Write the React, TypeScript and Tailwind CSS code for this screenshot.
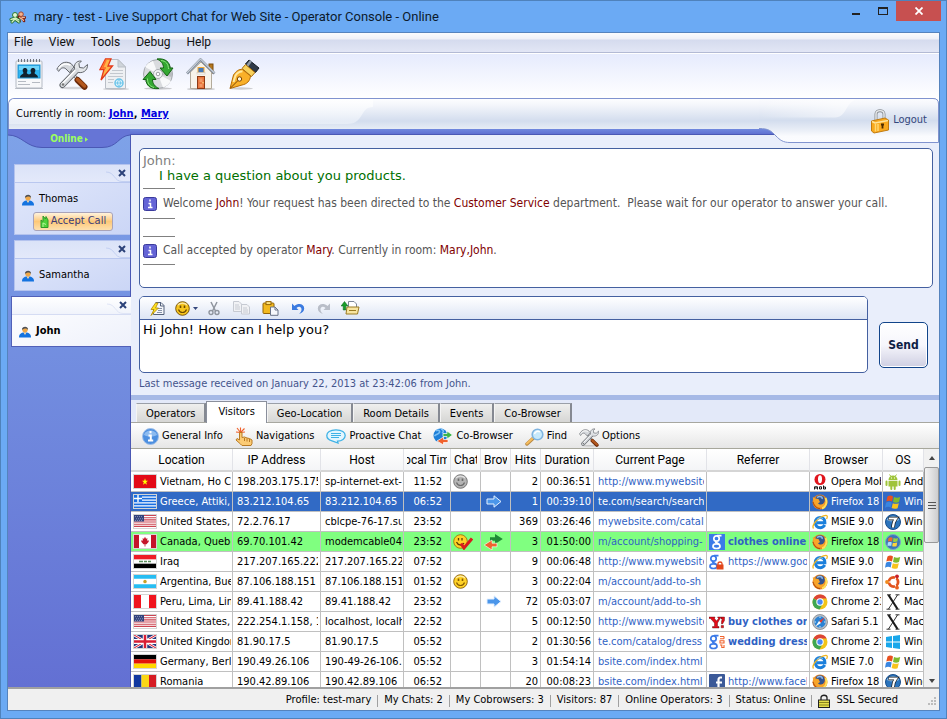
import React from 'react';
import clsx from 'clsx';

type IconProps = { className?: string };

/* ---------- main toolbar icons ---------- */

const PeopleLogo = () => (
  <svg viewBox="0 0 17 13" className="w-[17px] h-[13px]" fill="none">
    <path d="M10 5.5 C12 7 14.5 7.5 15 10 M13 6.5 L16 6.5 M10.5 10 L8.5 6" stroke="#7a1f14" strokeWidth="2.6" strokeLinecap="round" />
    <circle cx="12" cy="3.2" r="2.3" fill="#f2b28e" stroke="#a8452c" />
    <path d="M10.5 6.5 C12 8 14 8 14.5 9.5 M13 6.5 L15.5 6.3" stroke="#f2b28e" strokeWidth="1.3" strokeLinecap="round" />
    <path d="M2 8.5 L6.5 7 L10 9 M6 8 L3 11 M6.5 8.5 L10 11" stroke="#1c6a24" strokeWidth="3" strokeLinecap="round" />
    <circle cx="6" cy="4" r="2.5" fill="#e4f6d2" stroke="#2b7a33" />
    <path d="M2 8.5 L6.5 7 L10 9 M6 8 L3 11 M6.5 8.5 L10 11" stroke="#d4f0bf" strokeWidth="1.4" strokeLinecap="round" />
  </svg>
);

const ProfileIcon = () => (
  <svg viewBox="0 0 32 32" className="w-8 h-8">
    <rect x="3" y="3" width="26" height="27" rx="1" fill="#f7f8fa" stroke="#b4bac4" />
    <path d="M2 30.5 H30" stroke="#9aa0aa" strokeWidth="1" opacity=".6" />
    <path d="M5.5 1 V4 M8.5 1 V4 M11.5 1 V4 M14.5 1 V4 M17.5 1 V4 M20.5 1 V4 M23.5 1 V4 M26.5 1 V4" stroke="#6f747c" />
    <rect x="5" y="7" width="22" height="13" fill="#2fb5f0" stroke="#1d8fd0" />
    <rect x="6" y="8" width="20" height="4" fill="#6fd4fa" />
    <path d="M7 19.5 C7 16.5 10 16.5 10.5 15 C9 12.5 9.5 10 12 10 C14.5 10 15 12.5 13.7 15 C14 16 15.5 16 16 16.5 C16.5 16 18 16 18.3 15 C17 12.5 17.5 10 20 10 C22.5 10 23 12.5 21.5 15 C22 16.5 25 16.5 25 19.5 Z" fill="#10202e" />
    <path d="M5 23.5 H13 M5 26.5 H17 M19 24.5 H27" stroke="#b5bac2" />
  </svg>
);

const ToolsIcon = ({ className }: IconProps) => (
  <svg viewBox="0 0 32 32" className={className} strokeLinecap="round">
    <ellipse cx="17" cy="30" rx="13" ry="1.3" fill="#000" opacity=".15" />
    <path d="M14 13 L28 28" stroke="#6b6f74" strokeWidth="3" />
    <path d="M14 13 L26 26" stroke="#e9ebee" strokeWidth="1.3" />
    <path d="M21.5 22 L28.5 28.8" stroke="#6e2c0b" strokeWidth="6" />
    <path d="M21.5 21.5 L28.5 28" stroke="#b4581d" strokeWidth="3.5" />
    <path d="M1 11 C4 5 9 2.5 15 5.5 L18 9 L13.5 14.5 L10 11 C8 9 4.5 9.5 3 13 Z" fill="#d5d8dc" stroke="#63676d" />
    <path d="M3 10 C6 6 10 5 14 7" stroke="#fff" strokeWidth="1.5" fill="none" />
    <path d="M6.5 27 L21 12" stroke="#62666b" strokeWidth="6" />
    <path d="M25 3 C20 2.5 17 7 19 12 L21 14 C26 16 32 13 31.5 6.5 L27.5 10 L23.5 9.5 L23 6 Z" fill="#e3e6e9" stroke="#63676d" />
    <path d="M6.5 27 L21 12" stroke="#d8dbdf" strokeWidth="4" />
    <path d="M6 26 L19 12.5" stroke="#fff" strokeWidth="1.3" />
    <circle cx="7" cy="26.5" r="1.3" fill="#777" />
  </svg>
);

const LightningDocIcon = () => (
  <svg viewBox="0 0 32 32" className="w-8 h-8">
    <ellipse cx="17" cy="31" rx="13" ry="1" fill="#000" opacity=".2" />
    <path d="M6.5 1.5 H19 L26.5 9 V30.5 H6.5 Z" fill="#eef0f3" stroke="#b9bec6" />
    <path d="M19 1.5 V9 H26.5 Z" fill="#cfd4da" stroke="#b9bec6" />
    <path d="M13 12.5 H24 M11 15.5 H24 M9 18.5 H24 M9 21.5 H15 M9 24.5 H14" stroke="#c3c8cf" />
    <circle cx="20" cy="25" r="4" fill="#e3f6fd" stroke="#6bc4ea" strokeWidth="1.5" />
    <path d="M16.5 25 H23.5 M20 21.5 C18 24 18 26 20 28.5 C22 26 22 24 20 21.5" stroke="#6bc4ea" fill="none" />
    <path d="M6.5 .8 H12 L9 8 H13.5 L2 22 L5 11.5 H1 Z" fill="#ffb347" stroke="#e5391a" strokeWidth="1.3" />
    <path d="M7 2 L3.5 10 H7" fill="none" stroke="#ff6a2c" strokeWidth="1.5" />
  </svg>
);

const SyncDiscIcon = () => (
  <svg viewBox="0 0 32 32" className="w-8 h-8">
    <ellipse cx="16" cy="30.5" rx="14" ry="1.2" fill="#000" opacity=".2" />
    <circle cx="16" cy="16" r="14.5" fill="#d9dbde" stroke="#a4a8ad" />
    <path d="M16 16 L3 9 A14 14 0 0 1 11 3 Z" fill="#f8f9fa" />
    <path d="M16 16 L29 23 A14 14 0 0 1 21 29.5 Z" fill="#f8f9fa" />
    <path d="M16 16 L30 14 A14 14 0 0 1 30 19 Z" fill="#b9bcc0" />
    <circle cx="16" cy="16" r="4.5" fill="#f3f4f5" stroke="#a8abb0" />
    <circle cx="16" cy="16" r="1.8" fill="#fff" stroke="#9a9da2" />
    <path d="M15 1 C23 0 28 4 28 10 H31 L25 18 L18 10 H21.5 C21.5 5.5 19 3 15 1 Z" fill="#34a832" stroke="#156315" />
    <path d="M17 30.5 C8 31.5 4 27 4 21.5 H1 L8 13.5 L14 21.5 H10.5 C10.5 26 13 28.5 17 30.5 Z" fill="#34a832" stroke="#156315" />
    <path d="M19 2.5 C24 3 26.3 6 26.5 11 M5.5 20.5 C5.5 25 7 28 12 29.5" stroke="#8de07d" fill="none" />
  </svg>
);

const HouseIcon = () => (
  <svg viewBox="0 0 32 32" className="w-8 h-8">
    <ellipse cx="16" cy="31" rx="14" ry="1" fill="#000" opacity=".25" />
    <rect x="24" y="6" width="4" height="9" fill="#b5761d" stroke="#7c4c0c" />
    <path d="M5.5 14 L16 4 L26.5 14 V30.5 H5.5 Z" fill="#f7f3ea" stroke="#b3ab9c" />
    <path d="M2 15.5 L15.5 1.5 L29.5 15.5" fill="none" stroke="#7d8794" strokeWidth="2.6" />
    <path d="M2 15 L15.5 1 L29.5 15" fill="none" stroke="#c6ced8" strokeWidth="1.2" />
    <rect x="13" y="9.5" width="6" height="5.5" fill="#4479b8" stroke="#f4a93a" />
    <rect x="12" y="14.5" width="8" height="1.5" fill="#fff" stroke="#c5bcae" strokeWidth=".5" />
    <rect x="12.5" y="18.5" width="7" height="12" fill="#e8773f" stroke="#8d3a14" />
    <path d="M14.5 20.5 H17.5 V24 H14.5 Z M14.5 26 H17.5 V29 H14.5 Z" fill="#f29a66" />
    <circle cx="18" cy="24.8" r=".8" fill="#ffe08a" />
  </svg>
);

const PenIcon = () => (
  <svg viewBox="0 0 32 32" className="w-8 h-8">
    <ellipse cx="13" cy="30.5" rx="12" ry="1.2" fill="#000" opacity=".18" />
    <path d="M21 2 L31 10 L27.5 14.5 L17.5 6 Z" fill="#2f3a48" stroke="#141a22" />
    <path d="M22 2 L24 3.5 L20 9 L18 7.5 Z" fill="#8e9aa8" />
    <path d="M17.5 6.5 L27 14.5 L23.5 18.5 L14 10.5 Z" fill="#f8d15c" stroke="#a86b09" />
    <path d="M2 30.5 L5.5 17 C8 13 11 11 14.5 11.5 L22.5 18 C22 23 19 26 14 27 Z" fill="#f9b029" stroke="#b56c05" />
    <path d="M5.5 24 L7.5 17.5 C9.5 14.5 12 13 14.5 13.5" stroke="#ffe9a0" strokeWidth="2" fill="none" />
    <path d="M2.5 30 L11 21.5" stroke="#7b4400" />
    <circle cx="11.5" cy="21" r="2.2" fill="#fff6d8" stroke="#7b4400" />
  </svg>
);

const PadlockIcon = () => (
  <svg viewBox="0 0 20 26" className="w-5 h-[26px]">
    <path d="M6 13 V6 C6 1.5 14 1.5 14 6 V11" fill="none" stroke="#8b9096" strokeWidth="3" />
    <path d="M6 13 V6 C6 1.5 14 1.5 14 6 V11" fill="none" stroke="#e9ebed" strokeWidth="1.4" />
    <path d="M1.5 13 L15 10 L18.5 12 V22 L4 25 L1.5 23 Z" fill="#f9a91f" stroke="#c27c10" />
    <path d="M2 13.5 L5 15 L18 12.5" fill="none" stroke="#ffe49a" strokeWidth="1.5" />
    <path d="M5.5 16 V23.5 M8 16 V23" stroke="#ffd873" strokeWidth="1.5" />
    <path d="M12.5 15.5 V20.5 M11 16.5 H14" stroke="#4d2c00" strokeWidth="1.8" />
  </svg>
);

const CloseX = () => (
  <svg viewBox="0 0 8 8" className="w-2 h-2">
    <path d="M1 1 L7 7 M7 1 L1 7" stroke="#2c4279" strokeWidth="2" />
  </svg>
);

const UserIcon = () => (
  <svg viewBox="0 0 12 12" className="w-3 h-3">
    <path d="M0 11.5 C0 8 2 7 4 6.5 H8 C10 7 12 8 12 11.5 Z" fill="#1473e0" />
    <path d="M4.5 6.5 L6 9 L7.5 6.5 Z" fill="#f7d9a8" />
    <circle cx="6" cy="3.8" r="2.7" fill="#f0a848" />
    <path d="M3 4 C2.5 0 9.5 -.5 9 4 C8 2 5 2 3 4" fill="#4c5058" />
  </svg>
);

const AcceptIcon = () => (
  <svg viewBox="0 0 10 14" className="w-2.5 h-3.5">
    <path d="M1 5 L3 6.5 V1 L5.5 4 L6 1.5 L8 5 V12.5 H1 Z" fill="#4fd23a" stroke="#2f9a28" />
    <path d="M3 12 V8 L6 9.5" fill="none" stroke="#b6f59d" />
  </svg>
);

const InfoSquare = () => (
  <svg viewBox="0 0 14 14" className="w-3.5 h-3.5 shrink-0">
    <rect x=".5" y=".5" width="13" height="13" rx="2" fill="#6464d6" stroke="#3b3b9c" />
    <path d="M7 2.5 V4.5 M5.5 6.5 H7.5 V10.5 M5 10.5 H9.5" stroke="#fff" strokeWidth="1.5" fill="none" />
  </svg>
);

/* ---------- message editor icons ---------- */

const SnippetIcon = () => (
  <svg viewBox="0 0 15 15" className="w-[15px] h-[15px]">
    <path d="M5.5 1.5 H11 L14 4.5 V13.5 H3.5 V8" fill="#f4f6fa" stroke="#54627c" />
    <path d="M10.5 1.5 V5 H14" fill="none" stroke="#54627c" />
    <path d="M8 7.5 H12 M8 9.5 H12 M7 11.5 H12" stroke="#8792a8" />
    <path d="M5.5 2 L1 8.5 H4 L1 14.5 L8.5 7 H5.5 L8 2 Z" fill="#ffe11f" stroke="#b08800" strokeWidth=".8" />
  </svg>
);

const Smiley = ({ fill = '#f7c51e', line = '#6d4b00' }: { fill?: string; line?: string }) => (
  <svg viewBox="0 0 15 15" className="w-[15px] h-[15px]">
    <circle cx="7.5" cy="7.5" r="6.8" fill={fill} stroke={line} strokeWidth=".9" />
    <path d="M3 4 C5 1.5 10 1.5 12 4" stroke="#fff" opacity=".6" fill="none" strokeWidth="1.3" />
    <path d="M5.5 4.5 V7 M9.5 4.5 V7" stroke={line} strokeWidth="1.6" />
    <path d="M3.5 8.5 C5 12.5 10 12.5 11.5 8.5" stroke={line} strokeWidth="1.2" fill="none" />
  </svg>
);

const ScissorsIcon = () => (
  <svg viewBox="0 0 12 15" className="w-3 h-[15px]" fill="none" stroke="#8f959e">
    <path d="M3 1 L7.5 10 M9 1 L4.5 10" strokeWidth="1.5" />
    <circle cx="3" cy="11.5" r="2" strokeWidth="1.4" />
    <circle cx="9" cy="11.5" r="2" strokeWidth="1.4" />
  </svg>
);

const CopyIcon = () => (
  <svg viewBox="0 0 19 14" className="w-[19px] h-3.5" fill="#f1f2f5" stroke="#c6cad2">
    <path d="M1.5 .5 H7 L9.5 3 V10.5 H1.5 Z" />
    <path d="M3 4 H7 M3 6 H8 M3 8 H8" />
    <path d="M9.5 3.5 H15 L17.5 6 V13 H9.5 Z" />
    <path d="M11 7 H15 M11 9 H16 M11 11 H16" />
  </svg>
);

const PasteIcon = () => (
  <svg viewBox="0 0 17 15" className="w-[17px] h-[15px]">
    <rect x="1" y="2" width="11" height="10.5" rx="1" fill="#f2b91e" stroke="#946405" />
    <rect x="4" y=".6" width="5" height="3" fill="#ffe37c" stroke="#946405" />
    <path d="M8.5 6 H13 L16 9 V14.3 H8.5 Z" fill="#f6f8fc" stroke="#6a7488" />
    <path d="M13 6 V9 H16" fill="none" stroke="#6a7488" />
  </svg>
);

const UndoIcon = ({ className }: IconProps) => (
  <svg viewBox="0 0 14 13" className={className}>
    <path d="M1 1.5 V8 H7.5 L5.5 6 C8 3.5 11 5 10.5 8 C10.3 9.5 9.5 10.7 8 12 C11.5 11 13.2 9 13.2 6.5 C13.2 2 7.5 .5 3.5 4 Z" fill="currentColor" />
  </svg>
);

const UploadIcon = () => (
  <svg viewBox="0 0 19 14" className="w-[19px] h-3.5">
    <path d="M7.5 .5 H13 L15.5 3 V9 H7.5 Z" fill="#fff" stroke="#7e8798" />
    <path d="M6 6 H18 L16.5 13 H5 Z" fill="#f8e5a0" stroke="#9a7b22" />
    <path d="M8 9.5 H15" stroke="#9a7b22" />
    <path d="M3.5 .5 L7 5 H4.8 V9 H2.2 V5 H0 Z" fill="#179c2b" stroke="#0b6418" strokeWidth=".5" />
  </svg>
);

/* ---------- visitor toolbar icons ---------- */

const InfoCircle = () => (
  <svg viewBox="0 0 17 17" className="w-[17px] h-[17px]">
    <circle cx="8.5" cy="8.5" r="8" fill="#4c8fe0" stroke="#9fbfe8" />
    <path d="M2 7 C3 1 14 1 15 7 C11 9 6 9 2 7" fill="#a8cdf7" opacity=".7" />
    <path d="M8.5 3 V5.2 M6.5 7.5 H8.8 V12.5 M6 12.5 H11.2" stroke="#fff" strokeWidth="2" fill="none" />
  </svg>
);

const HandIcon = () => (
  <svg viewBox="0 0 18 19" className="w-[18px] h-[19px]">
    <path d="M5.5 5.5 L2 1 M5.5 5.5 V.5 M5.5 5.5 L9.5 1.5 M5.5 5.5 L1 5 M5.5 5.5 L10 5" stroke="#f0602a" strokeWidth="1.1" />
    <path d="M5.5 17 L1 13 L2 11.5 L4.5 13 V5.5 H7 V10.5 L9.5 10 L12 11 L14.5 11.5 L17 13 V16.5 L16 18.5 H7 Z" fill="#fbcb74" stroke="#b87a22" />
    <path d="M9.5 11 V14 M12 11.5 V14.5 M14.5 12 V15" stroke="#b87a22" />
  </svg>
);

const ChatBubble = () => (
  <svg viewBox="0 0 20 15" className="w-5 h-[15px]">
    <path d="M10 .8 C4 .8 .8 3.3 .8 6.5 C.8 9 3 11 6 11.8 L12 14 L11.5 12.2 C16 12 19.2 9.5 19.2 6.5 C19.2 3.3 16 .8 10 .8 Z" fill="#e4f6fe" stroke="#3fb2e6" strokeWidth="1.3" />
    <path d="M5 4.5 H15 M5 6.5 H15 M5 8.5 H13" stroke="#3fb2e6" />
  </svg>
);

const GlobeArrows = () => (
  <svg viewBox="0 0 20 17" className="w-5 h-[17px]">
    <circle cx="7.5" cy="7.5" r="7" fill="#1d7fd8" />
    <path d="M3 3 C5 1 8 3 6 5 C4 7 3 6 1.5 8 M8 1 C11 2 11 4 9 5" stroke="#7cc0f4" strokeWidth="1.6" fill="none" />
    <path d="M10 5.5 H14 V3 L19.5 7 L14 11 V8.5 H10 Z" fill="#3db54a" stroke="#fff" strokeWidth=".7" />
    <path d="M15 11.5 H10.5 V9 L4 13 L10.5 17 V14.5 H15 Z" fill="#f0622d" stroke="#fff" strokeWidth=".7" />
  </svg>
);

const FindIcon = () => (
  <svg viewBox="0 0 19 18" className="w-[19px] h-[18px]">
    <path d="M2 16 L8.5 10" stroke="#b98a45" strokeWidth="3.5" strokeLinecap="round" />
    <path d="M2 15.5 L8 10" stroke="#f7bd5c" strokeWidth="2" strokeLinecap="round" />
    <circle cx="12.5" cy="6.5" r="5.3" fill="#c7e9fb" stroke="#7fb4e0" strokeWidth="1.6" />
    <path d="M9.5 6 C10 3.5 13 2.5 15 4" stroke="#fff" strokeWidth="1.5" fill="none" />
  </svg>
);

/* ---------- grid icons ---------- */

const ArrowCell = () => (
  <svg viewBox="0 0 16 13" className="w-4 h-[13px]">
    <path d="M1 4 H8 V.8 L15 6.5 L8 12.2 V9 H1 Z" fill="#4b96ea" stroke="#e4f0ff" />
  </svg>
);

const TwoArrowsCell = () => (
  <svg viewBox="0 0 19 16" className="w-[19px] h-4">
    <path d="M6 3.2 H11 V0 L18.8 5 L11 10 V6.8 H6 Z" fill="#1f8a35" />
    <path d="M13 9.2 H8 V6 L.2 11 L8 16 V12.8 H13 Z" fill="#f0622d" stroke="#fff" strokeWidth=".6" />
  </svg>
);

const SmileyCheck = () => (
  <svg viewBox="0 0 20 16" className="w-5 h-4">
    <circle cx="7.5" cy="7.5" r="6.8" fill="#ffd227" stroke="#9a6a00" strokeWidth=".8" />
    <path d="M5.5 4 V6.5 M9 4 V6.5 M3.5 8 C5 11.5 9 12 11 9" stroke="#5b3f00" strokeWidth="1.3" fill="none" />
    <path d="M8 9.5 L11 14 L19 4.5" stroke="#d81c1c" strokeWidth="3" fill="none" />
  </svg>
);

const FlagShapes: Record<string, React.ReactNode> = {
  vn: (
    <>
      <rect width="22" height="12" fill="#e30a17" />
      <path d="M11 3 L11.8 5.3 H14 L12.2 6.6 L13 9 L11 7.5 L9 9 L9.8 6.6 L8 5.3 H10.2 Z" fill="#ff0" />
    </>
  ),
  gr: (
    <>
      <rect width="22" height="12" fill="#1a6fe0" />
      <path d="M0 2 H22 M0 4.7 H22 M0 7.3 H22 M0 10 H22" stroke="#fff" strokeWidth="1.2" />
      <rect width="8" height="6.5" fill="#1a6fe0" />
      <path d="M4 0 V6.5 M0 3.2 H8" stroke="#fff" strokeWidth="1.4" />
    </>
  ),
  us: (
    <>
      <rect width="22" height="12" fill="#fff" />
      <path d="M0 .5 H22 M0 2.5 H22 M0 4.5 H22 M0 6.5 H22 M0 8.5 H22 M0 10.5 H22" stroke="#cc4452" />
      <rect width="10" height="6" fill="#33437c" />
      <path d="M1 1.5 H9 M2 3.5 H9 M1 5 H9" stroke="#9aa4c8" strokeDasharray="1 1" strokeWidth=".8" />
    </>
  ),
  ca: (
    <>
      <rect width="22" height="12" fill="#fff" />
      <path d="M0 0 H5 V12 H0 Z M17 0 H22 V12 H17 Z" fill="#c4152a" />
      <path d="M11 1.5 L12 3.5 L13.5 3 L13 5 L15 5 L14.5 6.5 L12.5 8.5 H11.4 V10.5 H10.6 V8.5 H9.5 L7.5 6.5 L7 5 L9 5 L8.5 3 L10 3.5 Z" fill="#c4152a" />
    </>
  ),
  iq: (
    <>
      <rect width="22" height="12" fill="#fff" />
      <rect width="22" height="4" fill="#ee1c25" />
      <rect y="8" width="22" height="4" fill="#000" />
      <path d="M5 6 H9 M10 6 H13 M14 6 H17" stroke="#5b8f5c" strokeWidth="1.2" />
    </>
  ),
  ar: (
    <>
      <rect width="22" height="12" fill="#fff" />
      <path d="M0 0 H22 V3.5 H0 Z M0 8.5 H22 V12 H0 Z" fill="#27bdf2" />
      <circle cx="11" cy="6" r="1.7" fill="#c9a227" />
    </>
  ),
  pe: (
    <>
      <rect width="22" height="12" fill="#fff" />
      <path d="M0 0 H7 V12 H0 Z M15 0 H22 V12 H15 Z" fill="#f0141e" />
    </>
  ),
  gb: (
    <>
      <rect width="22" height="12" fill="#26387e" />
      <path d="M0 0 L22 12 M22 0 L0 12" stroke="#fff" strokeWidth="2.5" />
      <path d="M0 0 L22 12 M22 0 L0 12" stroke="#d81e34" strokeWidth="1" />
      <path d="M11 0 V12 M0 6 H22" stroke="#fff" strokeWidth="4.5" />
      <path d="M11 0 V12 M0 6 H22" stroke="#d81e34" strokeWidth="2.5" />
    </>
  ),
  de: (
    <>
      <rect width="22" height="4" fill="#000" />
      <rect y="4" width="22" height="4" fill="#e3120b" />
      <rect y="8" width="22" height="4" fill="#ffd800" />
    </>
  ),
  ro: (
    <>
      <rect width="7.5" height="12" fill="#1138a0" />
      <rect x="7.5" width="7.5" height="12" fill="#fbd716" />
      <rect x="15" width="7" height="12" fill="#d61c24" />
    </>
  ),
};

const Flag = ({ code }: { code: string }) => (
  <svg viewBox="0 0 22 12" preserveAspectRatio="none" className="w-6 h-[15px] shrink-0 border border-[#d5d5d5] bg-white">
    {FlagShapes[code]}
  </svg>
);

const BrowserShapes: Record<string, React.ReactNode> = {
  opera: (
    <>
      <ellipse cx="8" cy="5.5" rx="5.5" ry="5.5" fill="#e0141c" />
      <ellipse cx="8" cy="5.3" rx="2" ry="4" fill="#fff" />
      <path d="M2.5 15.5 V12.8 H5.5 V15.5 M4 12.8 V15 M7.5 12.8 H9.5 V15 H7.5 Z M11.5 11.5 V15 H13.5 V13 H11.5" stroke="#000" strokeWidth=".9" fill="none" />
    </>
  ),
  firefox: (
    <>
      <circle cx="8" cy="8" r="7.5" fill="#ea8420" />
      <circle cx="8" cy="6" r="4.8" fill="#33548f" />
      <path d="M5 3.5 C8 1.5 11 3 10 5" stroke="#8db8e8" strokeWidth="1.5" fill="none" />
      <path d="M.8 3 L3.5 4.5 L6.5 5 L8 8 L6 9.5 C8 11.5 11.5 11 12.5 8 C13 11 11.5 13.5 8 13.5 C4 13.5 1 9 .8 3" fill="#f8a52a" />
      <path d="M13.5 4 C15.5 8 14 13 10 14.5" stroke="#ffe05a" strokeWidth="2" fill="none" />
      <path d="M1 8 C2 12 5 14.5 8 14.7" stroke="#a8480c" strokeWidth="1" fill="none" />
    </>
  ),
  ie: (
    <>
      <path d="M12.8 11 C11.5 13 10 13.8 8.3 13.8 C5 13.8 3.3 11.5 3.3 8.5 C3.3 5.5 5.5 3.5 8.3 3.5 C11.5 3.5 13 5.8 12.9 8.8 H5" fill="none" stroke="#1b7fdc" strokeWidth="3" />
      <path d="M1.5 14.5 C-1 11 7 2 14 1.3 C15.5 1.2 15.7 3 14.5 5" fill="none" stroke="#f2b722" strokeWidth="1.3" />
      <path d="M5 5.5 C6 4 9 3.5 11 4.5" stroke="#7cc4fb" fill="none" />
    </>
  ),
  chrome: (
    <>
      <circle cx="8" cy="8" r="7.5" fill="#f2c418" />
      <path d="M8 8 L1.5 4.2 A7.5 7.5 0 0 1 14.7 4.5 L8 4.5 Z" fill="#dc4437" />
      <path d="M8 8 L1.4 4.4 A7.5 7.5 0 0 0 7.5 15.5 L10.8 9.8 Z" fill="#3fa652" />
      <circle cx="8" cy="8" r="3.7" fill="#fff" />
      <circle cx="8" cy="8" r="2.7" fill="#4a8af4" />
    </>
  ),
  safari: (
    <>
      <circle cx="8" cy="8" r="7.5" fill="#b9bec5" stroke="#7d838a" strokeWidth=".8" />
      <circle cx="8" cy="8" r="5.7" fill="#2b83d4" />
      <path d="M8 2.5 V4 M8 12 V13.5 M2.5 8 H4 M12 8 H13.5" stroke="#cfe7fb" />
      <path d="M12.5 3.5 L9 9 L7 7 Z" fill="#e5392c" />
      <path d="M3.5 12.5 L9 9 L7 7 Z" fill="#fff" />
    </>
  ),
};

const OsShapes: Record<string, React.ReactNode> = {
  android: (
    <>
      <path d="M3.5 6 A4.5 4.5 0 0 1 12.5 6 Z M3.5 6.8 H12.5 V12.5 H3.5 Z" fill="#9fc43a" />
      <path d="M1.5 7.5 V11 M14.5 7.5 V11 M6.3 12 V15 M9.7 12 V15" stroke="#9fc43a" strokeWidth="2" strokeLinecap="round" />
      <path d="M4.5 .5 L6 2.5 M11.5 .5 L10 2.5" stroke="#9fc43a" />
      <path d="M6 4 H7 M9 4 H10" stroke="#fff" />
    </>
  ),
  xp: (
    <>
      <path d="M2.5 2.5 C4.5 1 6.5 1.5 8 2.5 L7 7.5 C5 6.5 3.5 6.5 1.3 7.5 Z" fill="#e8501f" />
      <path d="M9 3 C11 4 13 4 15.2 3 L14 8 C12 9 10 8.8 8 8 Z" fill="#7fba2b" />
      <path d="M1 8.8 C3 7.5 5 7.5 6.7 8.5 L5.7 13.5 C4 12.5 2 12.5 0 13.8 Z" fill="#3a86e0" />
      <path d="M7.8 9.2 C10 10 11.5 10 13.8 9.2 L12.6 14.2 C10.5 15 8.5 15 6.6 14 Z" fill="#f8c31c" />
    </>
  ),
  win7: (
    <>
      <circle cx="8" cy="8" r="7.5" fill="#2b74bd" stroke="#1a4f8a" />
      <path d="M2 6 C3 1 13 1 14 6 C10 8 6 8 2 6" fill="#b9dbf6" opacity=".8" />
      <path d="M3.5 4.5 H11 C9 7 8.2 10 8 13.5" fill="none" stroke="#111" strokeWidth="3.6" />
      <path d="M4 4.5 H11 C9 7 8.2 10 8 13.5" fill="none" stroke="#fff" strokeWidth="2.2" />
    </>
  ),
  vista: (
    <>
      <circle cx="8" cy="8" r="7.5" fill="#3b78b8" stroke="#7fa5c8" />
      <path d="M3.5 4 C5.5 3 6.5 3.3 7.6 3.8 L7 7.5 C6 7 5 7 3 7.6 Z" fill="#f26a2a" />
      <path d="M8.5 4.1 C10 4.8 11 4.7 13 4 L12.3 7.6 C10.5 8.2 9.5 8.2 8 7.7 Z" fill="#9cd040" />
      <path d="M2.8 8.5 C4.5 7.9 5.7 8 6.8 8.4 L6.2 12 C5 11.5 4 11.5 2.5 12 Z" fill="#a8dcff" />
      <path d="M7.8 8.7 C9 9.2 10.3 9.2 12.2 8.6 L11.5 12.2 C9.8 12.8 8.6 12.7 7.2 12.2 Z" fill="#ffd43a" />
    </>
  ),
  ubuntu: (
    <>
      <circle cx="8.5" cy="8" r="4.6" fill="none" stroke="#e2531f" strokeWidth="2.8" />
      <path d="M8.5 8 L2 8 M8.5 8 L12 1.5 M8.5 8 L12 14.5" stroke="#fff" strokeWidth="1.2" />
      <circle cx="2" cy="8" r="1.9" fill="#f08a1e" />
      <circle cx="12" cy="2.3" r="1.9" fill="#c7212b" />
      <circle cx="12" cy="13.7" r="1.9" fill="#e9601e" />
    </>
  ),
  mac: (
    <>
      <path d="M3.5 1 L12.5 15" stroke="#1b1b1b" strokeWidth="2.2" />
      <path d="M12.5 1 L3.5 15 M2 .8 H6 M10.5 .8 H14.5 M1.5 15.2 H5.5 M10.5 15.2 H14.5" stroke="#1b1b1b" strokeWidth=".9" />
    </>
  ),
  win8: <path d="M1 3 L7 2.1 V7.5 H1 Z M8 2 L15 1 V7.5 H8 Z M1 8.5 H7 V13.9 L1 13 Z M8 8.5 H15 V15 L8 14 Z" fill="#19a7ea" />,
};

const googleG = (color: string) => (
  <g fill="none" stroke={color} strokeWidth="1.7">
    <circle cx="7.5" cy="4.5" r="2.7" />
    <ellipse cx="7.5" cy="12.2" rx="3.5" ry="2.3" />
    <path d="M12.5 1.6 H8 M7 7.2 C5.5 8.7 9 8.5 10 10.3" />
  </g>
);

const ReferrerShapes: Record<string, React.ReactNode> = {
  google: (
    <>
      <rect width="16" height="16" fill="#3b7ae8" />
      {googleG('#fff')}
    </>
  ),
  googleSsl: (
    <>
      <g transform="translate(-3 0)">{googleG('#3b7ae8')}</g>
      <path d="M9 11 V9.5 C9 7.5 13 7.5 13 9.5 V11" fill="none" stroke="#e2461c" strokeWidth="1.3" />
      <rect x="7.5" y="10.5" width="7" height="5" fill="#e2461c" />
    </>
  ),
  yahoo: (
    <path d="M0 3 H6 L5.5 4.5 L7.5 7 L9.5 4.5 L8.5 3 H12 L8.5 9 V12.5 H10 V14 H3.5 V12.5 H5.5 V9 L1.5 4.5 H0 Z M12 3 H15.5 V6.5 L13.5 10 H12.5 V7 L13.5 5 H12 Z M12.2 11.5 H14.5 V13.8 H12.2 Z" fill="#e30b17" stroke="#4a0005" strokeWidth=".4" />
  ),
  googleAds: (
    <>
      <g transform="translate(-3 0)">{googleG('#3b7ae8')}</g>
      <path d="M11 2.5 H15 M11 4.8 H15 M15 2.5 V4.8 M11 6.8 H15 V9 H11 Z M11 11 H12.8 V13.5 H15 V11" stroke="#f0622d" strokeWidth="1.1" fill="none" />
    </>
  ),
  facebook: (
    <>
      <rect width="16" height="16" rx="1" fill="#3b5998" />
      <path d="M13 3.5 H11.5 C10 3.5 9.5 4.5 9.5 6 V15 M7 8.5 H13" stroke="#fff" strokeWidth="2.2" fill="none" />
      <path d="M1 14.5 H15" stroke="#8ba0cb" />
    </>
  ),
};

const Glyph = ({ children }: { children: React.ReactNode }) => (
  <svg viewBox="0 0 16 16" className="w-4 h-4 shrink-0">{children}</svg>
);

/* ---------- data ---------- */

interface Visitor {
  flag: string;
  location: string;
  ip: string;
  host: string;
  time: string;
  chat?: 'away' | 'accepted' | 'online';
  browse?: 'one' | 'two';
  hits: number;
  duration: string;
  page: string;
  referrer?: { kind: string; text: string; bold?: boolean };
  browser: [string, string];
  os: [string, string];
  state?: 'selected' | 'active';
}

const visitors: Visitor[] = [
  { flag: 'vn', location: 'Vietnam, Ho Chi Minh', ip: '198.203.175.175', host: 'sp-internet-ext-1', time: '11:52', chat: 'away', hits: 2, duration: '00:36:51', page: 'http://www.mywebsite.com', browser: ['opera', 'Opera Mobile'], os: ['android', 'Android'] },
  { flag: 'gr', location: 'Greece, Attiki, Athens', ip: '83.212.104.65', host: '83.212.104.65', time: '06:52', browse: 'one', hits: 1, duration: '00:39:10', page: 'te.com/search/search', browser: ['firefox', 'Firefox 18'], os: ['xp', 'Windows'], state: 'selected' },
  { flag: 'us', location: 'United States, Texas', ip: '72.2.76.17', host: 'cblcpe-76-17.suddenlink', time: '23:52', hits: 369, duration: '03:26:46', page: 'mywebsite.com/catalog', browser: ['ie', 'MSIE 9.0'], os: ['win7', 'Windows'] },
  { flag: 'ca', location: 'Canada, Quebec', ip: '69.70.101.42', host: 'modemcable042.101', time: '23:52', chat: 'accepted', browse: 'two', hits: 3, duration: '01:50:00', page: 'm/account/shopping-', referrer: { kind: 'google', text: 'clothes online', bold: true }, browser: ['firefox', 'Firefox 18'], os: ['vista', 'Windows'], state: 'active' },
  { flag: 'iq', location: 'Iraq', ip: '217.207.165.222', host: '217.207.165.222', time: '07:52', hits: 9, duration: '00:06:48', page: 'http://www.mywebsite.com', referrer: { kind: 'googleSsl', text: 'https://www.google.com' }, browser: ['ie', 'MSIE 9.0'], os: ['xp', 'Windows'] },
  { flag: 'ar', location: 'Argentina, Buenos Aires', ip: '87.106.188.151', host: '87.106.188.151', time: '01:52', chat: 'online', hits: 3, duration: '00:22:04', page: 'm/account/add-to-sh', browser: ['firefox', 'Firefox 17'], os: ['ubuntu', 'Linux'] },
  { flag: 'pe', location: 'Peru, Lima, Lima', ip: '89.41.188.42', host: '89.41.188.42', time: '23:52', browse: 'one', hits: 72, duration: '05:03:07', page: 'm/account/add-to-sh', browser: ['chrome', 'Chrome 23'], os: ['mac', 'Mac'] },
  { flag: 'us', location: 'United States, Ohio', ip: '222.254.1.158, 10', host: 'localhost, localhost', time: '22:52', hits: 5, duration: '00:12:50', page: 'http://www.mywebsite.com', referrer: { kind: 'yahoo', text: 'buy clothes online', bold: true }, browser: ['safari', 'Safari 5.1'], os: ['mac', 'Mac'] },
  { flag: 'gb', location: 'United Kingdom', ip: '81.90.17.5', host: '81.90.17.5', time: '05:52', hits: 2, duration: '01:30:56', page: 'te.com/catalog/dress', referrer: { kind: 'googleAds', text: 'wedding dresses', bold: true }, browser: ['chrome', 'Chrome 23'], os: ['win8', 'Windows'] },
  { flag: 'de', location: 'Germany, Berlin', ip: '190.49.26.106', host: '190-49-26-106.net', time: '05:52', hits: 3, duration: '01:54:14', page: 'bsite.com/index.html', browser: ['ie', 'MSIE 7.0'], os: ['xp', 'Windows'] },
  { flag: 'ro', location: 'Romania', ip: '190.42.89.106', host: '190.42.89.106', time: '06:52', hits: 20, duration: '00:08:23', page: 'bsite.com/index.html', referrer: { kind: 'facebook', text: 'http://www.facebook.com' }, browser: ['firefox', 'Firefox 18'], os: ['win7', 'Windows'] },
];

const columns: { label: string; width: string; align?: string }[] = [
  { label: 'Location', width: 'w-[102px]' },
  { label: 'IP Address', width: 'w-[88px]' },
  { label: 'Host', width: 'w-[83px]' },
  { label: 'Local Time', width: 'w-[47px]' },
  { label: 'Chat', width: 'w-[30px]', align: 'justify-start' },
  { label: 'Browse', width: 'w-[30px]', align: 'justify-start' },
  { label: 'Hits', width: 'w-[30px]' },
  { label: 'Duration', width: 'w-[53px]' },
  { label: 'Current Page', width: 'w-[113px]' },
  { label: 'Referrer', width: 'w-[103px]' },
  { label: 'Browser', width: 'w-[73px]' },
  { label: 'OS', width: 'w-[41px]' },
];

const tabs = ['Operators', 'Visitors', 'Geo-Location', 'Room Details', 'Events', 'Co-Browser'];

const visitorTools = [
  { label: 'General Info', icon: <InfoCircle /> },
  { label: 'Navigations', icon: <HandIcon /> },
  { label: 'Proactive Chat', icon: <ChatBubble /> },
  { label: 'Co-Browser', icon: <GlobeArrows /> },
  { label: 'Find', icon: <FindIcon /> },
  { label: 'Options', icon: <ToolsIcon className="w-5 h-5" /> },
];

const statusItems = ['Profile: test-mary', 'My Chats: 2', 'My Cobrowsers: 3', 'Visitors: 87', 'Online Operators: 3', 'Status: Online'];

/* ---------- sections ---------- */

const TitleBar = () => (
  <header className="flex h-[31px] shrink-0 items-start">
    <div className="flex flex-1 items-center gap-2 pl-0.5 pt-1.5">
      <PeopleLogo />
      <h1 className="text-[13px] leading-5 text-[#0c1a2c] font-[Roboto,sans-serif]">
        mary - test - Live Support Chat for Web Site - Operator Console - Online
      </h1>
    </div>
    <button aria-label="Minimize" className="flex h-5 w-[27px] items-end justify-center pb-1.5">
      <span className="h-0.5 w-2 bg-[#222]" />
    </button>
    <button aria-label="Maximize" className="flex h-5 w-[27px] items-center justify-center">
      <span className="h-2 w-2.5 border border-t-2 border-[#222]" />
    </button>
    <button aria-label="Close" className="mr-1 flex h-5 w-[45px] items-center justify-center bg-[#c75050]">
      <svg viewBox="0 0 8 8" className="w-2 h-2">
        <path d="M.5 .5 L7.5 7.5 M7.5 .5 L.5 7.5" stroke="#fff" strokeWidth="1.8" />
      </svg>
    </button>
  </header>
);

const MenuBar = () => (
  <nav className="flex h-5 shrink-0 items-center gap-4 border-b border-[#b3bad4] bg-[linear-gradient(#fafbfd,#eef0f8_6px,#d5dbee_7px,#e2e6f5)] px-1.5 pb-0.5 text-[12px] text-[#111] font-[Roboto,sans-serif]">
    {['File', 'View', 'Tools', 'Debug', 'Help'].map((item) => (
      <button key={item}>{item}</button>
    ))}
  </nav>
);

const Toolbar = () => (
  <div className="flex h-[45px] shrink-0 items-start gap-[11px] border-t border-white bg-linear-to-b from-[#e6ebfd] to-white px-[5px] pt-1">
    <button aria-label="Profile"><ProfileIcon /></button>
    <button aria-label="Settings"><ToolsIcon className="w-8 h-8" /></button>
    <button aria-label="Quick replies"><LightningDocIcon /></button>
    <button aria-label="Synchronize"><SyncDiscIcon /></button>
    <button aria-label="Home"><HouseIcon /></button>
    <button aria-label="Compose"><PenIcon /></button>
  </div>
);

const RoomBar = () => (
  <div className="relative z-10 shrink-0">
    <div className="relative flex h-[31px] items-center rounded-t-md border-x border-t border-[#8093cf] bg-[linear-gradient(#fdfdff,#f4f6fb_6px,#d3ddee_22px,#e6ecf5)] px-[7px] text-[11px] text-black">
      {/* glossy highlight behind the room names */}
      <svg viewBox="0 0 364 26" className="absolute left-0 top-0 h-[26px] w-[364px]">
        <defs>
          <linearGradient id="gloss" x1="0" y1="0" x2="0" y2="1">
            <stop offset="0" stopColor="#fff" stopOpacity=".9" />
            <stop offset="1" stopColor="#f1f5fb" stopOpacity=".55" />
          </linearGradient>
        </defs>
        <path d="M4 0 H364 V8 C350 8 356 25 338 25 H0 V4 Z" fill="url(#gloss)" />
      </svg>
      <p className="relative">
        Currently in room: <a href="#john" className="font-bold text-[#0000e0] underline">John</a>
        <b>, </b>
        <a href="#mary" className="font-bold text-[#0000e0] underline">Mary</a>
      </p>
    </div>
    <div className="h-1.5 border-b border-[#4a58b4] bg-linear-to-b from-[#7088de] to-[#5f70d2]" />
    <div className="absolute right-0 top-0 flex h-[45px] w-[180px] items-center justify-end pr-3">
      <svg viewBox="0 0 180 45" className="absolute inset-0 h-full w-full">
        <defs>
          <linearGradient id="logoutTab" gradientUnits="userSpaceOnUse" x1="0" y1="0" x2="0" y2="45">
            <stop offset="0" stopColor="#fdfdff" />
            <stop offset=".15" stopColor="#f4f6fb" />
            <stop offset=".5" stopColor="#d3ddee" />
            <stop offset=".7" stopColor="#e8edf6" />
            <stop offset=".85" stopColor="#fafbfe" />
            <stop offset="1" stopColor="#fbfcff" />
          </linearGradient>
          <linearGradient id="swoosh" x1="0" y1="0" x2="1" y2="0">
            <stop offset="0" stopColor="#fff" stopOpacity="0" />
            <stop offset="1" stopColor="#fff" stopOpacity=".6" />
          </linearGradient>
        </defs>
        <path d="M0 30.5 C10 30.5 12 33 17 38 C21 42 24 44.5 31 44.5 H179.5 V6 Q179.5 .5 174 .5 H0 Z" fill="url(#logoutTab)" />
        <path d="M0 1 H98 C86 4 88 19.5 76 19.5 H0 Z" fill="url(#swoosh)" />
        <path d="M0 30.5 C10 30.5 12 33 17 38 C21 42 24 44.5 31 44.5 H179.5 V6 Q179.5 .5 174 .5 H0" fill="none" stroke="#8093cf" />
      </svg>
      <button className="relative flex items-center gap-[3px] text-[11px] text-[#34477c]">
        <PadlockIcon />
        Logout
      </button>
    </div>
  </div>
);

const ContactCard = ({ name, active, incoming }: { name: string; active?: boolean; incoming?: boolean }) => (
  <section
    className={clsx(
      'border border-r-0 bg-linear-to-br',
      active
        ? '-mr-px ml-[3px] border-[#5160b8] from-white to-[#eef1fb]'
        : 'ml-1.5 border-[#b4c3ee] from-[#e3e9fb] to-[#cbd6f6]'
    )}
  >
    <div
      className={clsx(
        'relative flex h-[18px] items-start justify-end border-b pr-1 pt-1',
        active ? 'border-[#d5dcf3] bg-linear-to-b from-white to-[#f0f3fb]' : 'border-[#b9c7ef] bg-linear-to-b from-[#dbe3f8] to-[#e3e9fa]'
      )}
    >
      <svg viewBox="0 0 24 12" className="absolute right-0 bottom-0 h-3 w-6" fill="none">
        <path d="M0 2 C9 2 8 11.5 16 11.5 H24" stroke={active ? '#dfe5f6' : '#c3d0f2'} />
      </svg>
      <button aria-label={`Close ${name}`} className="relative"><CloseX /></button>
    </div>
    <div className={clsx('flex h-[31px] items-center gap-[5px] px-[7px] pt-0.5 text-[11px] text-black', active && 'font-bold')}>
      <UserIcon />
      {name}
    </div>
    {incoming && (
      <button className="-mt-0.5 mb-[3px] ml-[18px] flex h-[19px] w-20 items-center justify-center gap-px rounded-[3px] border border-[#a9a3b8] bg-linear-to-b from-[#fff3dd] via-[#fdc877] to-[#fde0ae] text-[11px] text-[#3c3c78]">
        <AcceptIcon />
        Accept Call
      </button>
    )}
  </section>
);

const Sidebar = () => (
  <aside className="flex w-[123px] shrink-0 flex-col border-r border-[#4a58b4] bg-linear-to-b from-[#7ea2e8] to-[#6370d3]">
    <div className="relative mb-[17px] h-3 w-full">
      <svg viewBox="0 0 122 19" preserveAspectRatio="none" className="absolute -top-1.5 left-0 z-20 h-[19px] w-full">
        <path d="M0 0 H122 V6 C110 7 110 18.5 94 18.5 H34 C18 18.5 14 6 0 6 Z" fill="#6675d6" />
        <path d="M0 6 C14 6 18 18.5 34 18.5 H94 C110 18.5 110 7 122 6" fill="none" stroke="#4a58b4" />
      </svg>
      <button className="absolute inset-x-0 -top-1 z-30 flex items-center justify-center gap-0.5 text-[10px] leading-4 font-bold text-[#9bff5e]">
        Online
        <svg viewBox="0 0 4 6" className="w-[3px] h-[5px]"><path d="M0 0 L4 3 L0 6 Z" fill="currentColor" /></svg>
      </button>
    </div>
    <div className="flex flex-col gap-[5px]">
      <ContactCard name="Thomas" incoming />
      <ContactCard name="Samantha" />
      <ContactCard name="John" active />
    </div>
  </aside>
);

const Rule = () => <hr className="w-8 border-t border-[#808080]" />;

const Conversation = () => (
  <section className="h-[140px] shrink-0 overflow-hidden rounded-[5px] border border-[#4460a0] bg-white px-[3px] pt-1 text-[12px] leading-[15px] text-[#555]">
    <p className="text-[13px] text-[#808080] font-['DejaVu_Sans',sans-serif]">John:</p>
    <p className="pl-4 text-[13px] text-[#007000] font-['DejaVu_Sans',sans-serif]">I have a question about you products.</p>
    <div className="pt-[5px]"><Rule /></div>
    <p className="flex items-center gap-1.5 py-[7px] whitespace-pre">
      <InfoSquare />
      <span>Welcome <span className="text-[#800000]">John</span>! Your request has been directed to the <span className="text-[#800000]">Customer Service</span>{' department.  Please wait for our operator to answer your call.'}</span>
    </p>
    <Rule />
    <div className="pt-[17px]"><Rule /></div>
    <p className="flex items-center gap-1.5 py-1.5 whitespace-pre">
      <InfoSquare />
      <span>Call accepted by operator <span className="text-[#800000]">Mary</span>. Currently in room: <span className="text-[#800000]">Mary,John</span>.</span>
    </p>
    <Rule />
  </section>
);

const Composer = () => (
  <div className="mt-2 flex items-center gap-[11px]">
    <div className="flex-1 overflow-hidden rounded-[5px] border border-[#4460a0] bg-white">
      <div className="flex h-[23px] items-center border-b border-[#4460a0] bg-linear-to-b from-white to-[#dde5f4] pl-2.5">
        <button aria-label="Insert snippet" className="mr-2.5"><SnippetIcon /></button>
        <button aria-label="Insert smiley" className="mr-2.5 flex items-center gap-[3px]">
          <Smiley />
          <svg viewBox="0 0 5 3" className="w-[5px] h-[3px]"><path d="M0 0 H5 L2.5 3 Z" fill="#34477c" /></svg>
        </button>
        <button aria-label="Cut" className="mr-3"><ScissorsIcon /></button>
        <button aria-label="Copy" className="mr-[11px]"><CopyIcon /></button>
        <button aria-label="Paste" className="mr-3"><PasteIcon /></button>
        <button aria-label="Undo" className="mr-3 text-[#3b7be0]"><UndoIcon className="w-3.5 h-[13px]" /></button>
        <button aria-label="Redo" className="mr-2.5 text-[#b9bec8]"><UndoIcon className="w-3.5 h-[13px] -scale-x-100" /></button>
        <button aria-label="Send file"><UploadIcon /></button>
      </div>
      <textarea
        aria-label="Message"
        defaultValue="Hi John! How can I help you?"
        className="block h-[52px] w-full resize-none px-[3px] py-0.5 text-[13px] leading-4 text-black outline-none font-['DejaVu_Sans',sans-serif]"
      />
    </div>
    <button className="mr-[5px] mt-5 h-[46px] w-[49px] rounded-[5px] border border-[#11448a] bg-linear-to-b from-white via-[#f6f6fc] to-[#cfcfe2] text-[12px] font-bold text-[#0c2044] shadow-[inset_0_0_0_1px_#fff]">
      Send
    </button>
  </div>
);

const TabStrip = () => (
  <div role="tablist" className="flex h-[23px] shrink-0 items-end border-b border-[#a7a7a0] bg-[#e3e9f9] pl-[5px] text-[11px] text-black">
    {tabs.map((tab) => (
      <button
        key={tab}
        role="tab"
        aria-selected={tab === 'Visitors'}
        className={clsx(
          'border-t border-l',
          tab === 'Visitors'
            ? '-mb-px h-[22px] border-r border-[#8a8f9c] bg-white px-[11px]'
            : 'h-[19px] border-r-2 border-t-[#9a9fa8] border-r-[#858992] border-l-[#f4f4f4] bg-linear-to-b from-[#efefee] to-[#d6d6d4] px-[9px] pt-0.5'
        )}
      >
        {tab}
      </button>
    ))}
  </div>
);

const VisitorRow = ({ v }: { v: Visitor }) => {
  const linkColor = v.state === 'selected' ? 'text-white' : 'text-[#2f62c4]';
  return (
    <tr
      className={clsx(
        'h-5 [&>td]:overflow-hidden [&>td]:border-r [&>td]:border-b [&>td]:border-[#c0c0c0] [&>td]:p-0 [&>td]:whitespace-nowrap',
        v.state === 'selected' && 'bg-[#316ac5] text-white',
        v.state === 'active' && 'bg-[#80ff80]'
      )}
    >
      <td>
        <div className="mr-px flex items-center gap-[3px] overflow-hidden pl-0.5"><Flag code={v.flag} />{v.location}</div>
      </td>
      <td><div className="mr-0.5 overflow-hidden pl-1">{v.ip}</div></td>
      <td><div className="mr-px overflow-hidden pl-1">{v.host}</div></td>
      <td className="text-right"><div className="pr-2">{v.time}</div></td>
      <td>
        <div className="flex pl-0.5">
          {v.chat === 'away' && <Smiley fill="#b4b4b4" line="#6c6c6c" />}
          {v.chat === 'online' && <Smiley fill="#ffd227" line="#8a5e00" />}
          {v.chat === 'accepted' && <SmileyCheck />}
        </div>
      </td>
      <td>
        <div className="flex justify-center pr-1">
          {v.browse === 'one' && <ArrowCell />}
          {v.browse === 'two' && <TwoArrowsCell />}
        </div>
      </td>
      <td className="text-right"><div className="pr-0.5">{v.hits}</div></td>
      <td className="text-right"><div className="pr-0.5">{v.duration}</div></td>
      <td>
        <div className="mr-0.5 overflow-hidden pl-1"><a href="#page" className={linkColor}>{v.page}</a></div>
      </td>
      <td>
        {v.referrer && (
          <div className="mr-0.5 flex items-center gap-[3px] overflow-hidden pl-0.5">
            <Glyph>{ReferrerShapes[v.referrer.kind]}</Glyph>
            <a href="#referrer" className={clsx(linkColor, v.referrer.bold && 'font-bold')}>{v.referrer.text}</a>
          </div>
        )}
      </td>
      <td>
        <div className="mr-px flex items-center gap-[3px] overflow-hidden pl-0.5">
          <Glyph>{BrowserShapes[v.browser[0]]}</Glyph>{v.browser[1]}
        </div>
      </td>
      <td>
        <div className="flex items-center gap-[3px] pl-0.5"><Glyph>{OsShapes[v.os[0]]}</Glyph>{v.os[1]}</div>
      </td>
    </tr>
  );
};

const VisitorGrid = () => (
  <div className="flex min-h-0 flex-1 bg-white">
    <div className="min-w-0 flex-1 overflow-hidden">
      <table className="w-full table-fixed border-separate border-spacing-0 text-[11px] leading-[14px] text-black">
        <thead>
          <tr className="h-[23px] bg-linear-to-b from-white to-[#f3f4f6]">
            {columns.map((col) => (
              <th
                key={col.label}
                className={clsx('overflow-hidden border-r border-b-2 border-r-[#e2e3e8] border-b-[#d5d5d5] p-0 text-[12px] font-normal font-[Roboto,sans-serif]', col.width)}
              >
                <div className={clsx('mx-[3px] flex overflow-hidden whitespace-nowrap', col.align || 'justify-center')}>{col.label}</div>
              </th>
            ))}
          </tr>
        </thead>
        <tbody>
          {visitors.map((v) => (
            <VisitorRow key={v.ip} v={v} />
          ))}
        </tbody>
      </table>
    </div>
    {/* classic scrollbar */}
    <div className="flex w-[15px] shrink-0 flex-col bg-[#f1f1f1]">
      <div className="flex h-[18px] items-center justify-center">
        <svg viewBox="0 0 6 4" className="w-1.5 h-1"><path d="M0 4 L3 0 L6 4 Z" fill="#444" /></svg>
      </div>
      <div className="flex h-[76px] flex-col items-center justify-center gap-0.5 rounded-[2px] border border-[#989898] bg-linear-to-r from-[#f4f4f4] to-[#cdcdcf]">
        <span className="h-px w-2 bg-[#555]" />
        <span className="h-px w-2 bg-[#555]" />
        <span className="h-px w-2 bg-[#555]" />
      </div>
      <div className="flex-1" />
      <div className="flex h-3 items-center justify-center">
        <svg viewBox="0 0 6 4" className="w-1.5 h-1"><path d="M0 0 L3 4 L6 0 Z" fill="#444" /></svg>
      </div>
    </div>
  </div>
);

const StatusBar = () => (
  <footer className="flex h-[23px] shrink-0 items-center justify-end gap-1.5 border-t-2 border-[#a0a0a0] bg-[#f0f0f0] pt-0.5 text-[11px] text-black">
    {statusItems.map((item) => (
      <React.Fragment key={item}>
        <span>{item}</span>
        <span className="h-3 w-px bg-[#a0a0a0]" />
      </React.Fragment>
    ))}
    <svg viewBox="0 0 12 14" className="w-3 h-3.5">
      <path d="M3 6 V3.5 C3 .5 9 .5 9 3.5 V6" fill="none" stroke="#222" strokeWidth="1.3" />
      <rect x=".5" y="6" width="11" height="7.5" fill="#e6df4a" stroke="#222" />
      <path d="M1 8.5 H11 M1 11 H11" stroke="#8a8420" />
    </svg>
    <span>SSL Secured</span>
    <svg viewBox="0 0 9 9" className="ml-6 mr-0.5 w-[9px] h-[9px] self-end mb-1">
      <path d="M6 0 H8 V2 H6 Z M3 3 H5 V5 H3 Z M6 3 H8 V5 H6 Z M0 6 H2 V8 H0 Z M3 6 H5 V8 H3 Z M6 6 H8 V8 H6 Z" fill="#bcbcbc" />
    </svg>
  </footer>
);

export default function App() {
  return (
    <div className="flex h-screen flex-col overflow-hidden border border-[#4f82bb] bg-[#6baaf4] px-1.5 pb-[7px] font-['DejaVu_Sans_Condensed','DejaVu_Sans',sans-serif]">
      <div className="-mr-1.5 pr-px">
        <TitleBar />
      </div>
      <div className="flex min-h-0 flex-1 flex-col border border-[#5583bd] bg-white">
        <MenuBar />
        <Toolbar />
        <RoomBar />
        <div className="flex min-h-0 flex-1">
          <Sidebar />
          <main className="flex min-w-0 flex-1 flex-col bg-[#e9eefb]">
            <div className="px-2 pr-1.5 pt-[13px]">
              <Conversation />
              <Composer />
              <p className="py-1 text-[11px] leading-[14px] text-[#44548c]">
                Last message received on January 22, 2013 at 23:42:06 from John.
              </p>
            </div>
            <div className="h-[5px] shrink-0 bg-[#a6b9e6]" />
            <TabStrip />
            <div className="flex h-[26px] shrink-0 items-center gap-3 border-b border-[#a7a79c] bg-linear-to-b from-white to-[#e6e6e6] pl-[11px] pt-0.5 text-[11px] text-black">
              {visitorTools.map((tool) => (
                <button key={tool.label} className="flex items-center gap-[3px]">
                  {tool.icon}
                  {tool.label}
                </button>
              ))}
            </div>
            <VisitorGrid />
          </main>
        </div>
        <StatusBar />
      </div>
    </div>
  );
}
